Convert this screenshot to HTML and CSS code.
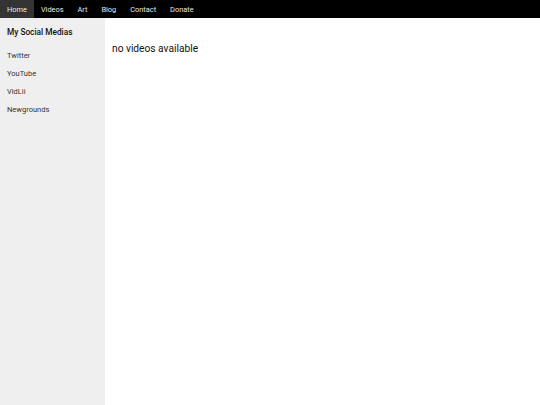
FILE: index.html
```html
<!DOCTYPE html>
<html>
<head>
<meta charset="utf-8">
<link rel="stylesheet" href="styles.css">
</head>
<body>
<nav class="topnav">
  <a class="nav-item active" href="#">Home</a>
  <a class="nav-item" href="#">Videos</a>
  <a class="nav-item" href="#">Art</a>
  <a class="nav-item" href="#">Blog</a>
  <a class="nav-item" href="#">Contact</a>
  <a class="nav-item" href="#">Donate</a>
</nav>
<div class="layout">
  <aside class="sidebar">
    <h2 class="side-title">My Social Medias</h2>
    <a class="side-link" href="#">Twitter</a>
    <a class="side-link" href="#">YouTube</a>
    <a class="side-link" href="#">VidLii</a>
    <a class="side-link" href="#">Newgrounds</a>
  </aside>
  <main class="content">
    <p class="empty">no videos available</p>
  </main>
</div>
</body>
</html>
```
FILE: styles.css
```css
html, body {
  margin: 0;
  padding: 0;
  height: 100%;
}
body {
  font-family: Roboto, "Liberation Sans", sans-serif;
  color: #000;
  background: #fff;
  display: flex;
  flex-direction: column;
}
.topnav {
  display: flex;
  background: #000;
  height: 18px;
  flex: none;
}
.nav-item {
  display: flex;
  align-items: center;
  padding: 0 7px;
  color: #e8e8e8;
  font-size: 7.4px;
  text-decoration: none;
}
.nav-item.active {
  background: #333;
}
.layout {
  display: flex;
  flex: 1;
}
.sidebar {
  width: 105px;
  background: #efefef;
  padding: 8px 7px;
  box-sizing: border-box;
  display: flex;
  flex-direction: column;
}
.side-title {
  font-size: 8.3px;
  font-weight: 500;
  margin: 0 0 9px;
  line-height: 12px;
  color: #111;
}
.side-link {
  color: #333;
  font-size: 7.5px;
  text-decoration: none;
  line-height: 18px;
}
.content {
  flex: 1;
  padding: 0 7px;
}
.empty {
  font-size: 10.2px;
  margin: 24px 0 0;
  line-height: 13px;
  color: #111;
}
```
